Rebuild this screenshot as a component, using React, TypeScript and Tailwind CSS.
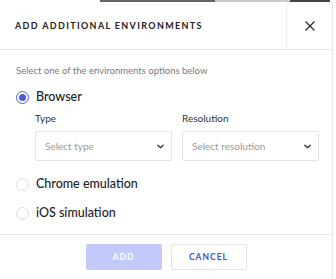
import React, { useState } from 'react';

const Chevron = () => (
  <svg className="w-[9px] h-[9px] text-gray-700" viewBox="0 0 10 10" fill="none" stroke="currentColor" strokeWidth={1.6}>
    <path d="M2 3.5L5 6.5l3-3" strokeLinecap="round" strokeLinejoin="round" />
  </svg>
);

const Radio = ({ checked, label, onClick }: { checked: boolean; label: string; onClick: () => void }) => (
  <button onClick={onClick} className="flex items-center gap-[7px] text-left h-[18px]">
    <span
      className={`w-[13px] h-[13px] rounded-full flex items-center justify-center ${
        checked ? 'border-[1.5px] border-[#4c5bd8]' : 'border border-[#dcdcdc]'
      }`}
    >
      {checked && <span className="w-[7px] h-[7px] rounded-full bg-[#4c5bd8]" />}
    </span>
    <span className="text-[12.5px] text-[#222] font-medium">{label}</span>
  </button>
);

const Select = ({ label, placeholder }: { label: string; placeholder: string }) => (
  <div className="flex flex-col w-[137px] shrink-0">
    <span className="text-[10px] text-[#333] mb-[6px] leading-[14px]">{label}</span>
    <div className="h-[30px] border border-[#e3e3e3] rounded-[2px] flex items-center justify-between pl-[9px] pr-[6px]">
      <span className="text-[10px] text-[#9a9a9a]">{placeholder}</span>
      <Chevron />
    </div>
  </div>
);

export default function App() {
  const [env, setEnv] = useState<'browser' | 'chrome' | 'ios'>('browser');

  return (
    <div className="w-[336px] h-[279px] bg-white overflow-hidden" style={{ fontFamily: 'Lato, "Open Sans", sans-serif' }}>
      <div className="flex h-[2px]">
        <div className="w-[100px] bg-white" />
        <div className="w-[115px] bg-[#666]" />
        <div className="w-[75px] bg-[#ccc]" />
        <div className="w-[40px] bg-[#444]" />
      </div>
      <div className="w-[333px] h-[277px] border-r border-[#e6e6e6] flex flex-col">
        {/* Header */}
        <div className="flex h-[48px] border-b border-[#e6e6e6]">
          <div className="flex-1 flex items-center pl-[15px]">
            <h2 className="text-[9px] font-bold tracking-[0.15em] text-[#222]">ADD ADDITIONAL ENVIRONMENTS</h2>
          </div>
          <button className="w-[46px] border-l border-[#ececec] flex items-center justify-center" aria-label="Close">
            <svg className="w-[10px] h-[10px] text-[#333]" viewBox="0 0 10 10" fill="none" stroke="currentColor" strokeWidth={1.4}>
              <path d="M0.5 0.5l9 9M9.5 0.5l-9 9" />
            </svg>
          </button>
        </div>

        {/* Body */}
        <div className="flex flex-col px-[16px] pt-[14px] h-[185px] border-b border-[#e6e6e6]">
          <p className="text-[9.5px] text-[#7a7a7a] leading-[14px]">Select one of the environments options below</p>
          <div className="mt-[10px]">
            <Radio checked={env === 'browser'} label="Browser" onClick={() => setEnv('browser')} />
          </div>
          <div className="flex gap-[10px] ml-[19px] mt-[5px]">
            <Select label="Type" placeholder="Select type" />
            <Select label="Resolution" placeholder="Select resolution" />
          </div>
          <div className="mt-[14px]">
            <Radio checked={env === 'chrome'} label="Chrome emulation" onClick={() => setEnv('chrome')} />
          </div>
          <div className="mt-[11px]">
            <Radio checked={env === 'ios'} label="iOS simulation" onClick={() => setEnv('ios')} />
          </div>
        </div>

        {/* Footer */}
        <div className="flex justify-center gap-[9px] pt-[9px]">
          <button className="w-[76px] h-[26px] rounded-[2px] bg-[#c4c9fb] text-white text-[8.5px] font-bold tracking-[0.12em]">
            ADD
          </button>
          <button className="w-[76px] h-[26px] rounded-[2px] border border-[#e3e3e3] bg-white text-[#3e4fc2] text-[8.5px] font-bold tracking-[0.12em]">
            CANCEL
          </button>
        </div>
      </div>
    </div>
  );
}
